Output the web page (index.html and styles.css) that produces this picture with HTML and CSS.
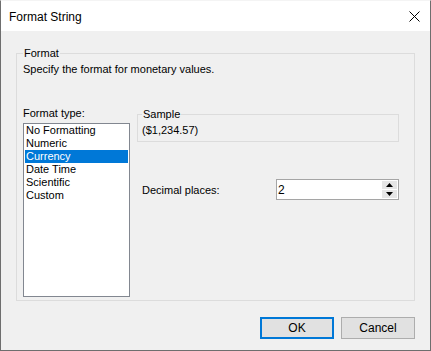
FILE: index.html
```html
<!DOCTYPE html>
<html>
<head>
    <meta charset="UTF-8">
    <title>Format String</title>
    <link rel="stylesheet" href="styles.css">
</head>
<body>
    <div class="window">
        <div class="titlebar">
            <span class="title">Format String</span>
            <svg class="close" width="11" height="11" viewBox="0 0 11 11">
                <path d="M0.5 0.5 L10.5 10.5 M10.5 0.5 L0.5 10.5" stroke="#000" stroke-width="1" fill="none"/>
            </svg>
        </div>
        <div class="client">
            <fieldset class="group">
                <legend>Format</legend>
                <div class="desc">Specify the format for monetary values.</div>
                <div class="columns">
                    <div class="type-col">
                        <div class="label">Format type:</div>
                        <ul class="listbox">
                            <li>No Formatting</li>
                            <li>Numeric</li>
                            <li class="selected">Currency</li>
                            <li>Date Time</li>
                            <li>Scientific</li>
                            <li>Custom</li>
                        </ul>
                    </div>
                    <div class="options">
                        <fieldset class="sample">
                            <legend>Sample</legend>
                            <div class="sample-value">($1,234.57)</div>
                        </fieldset>
                        <div class="decimals">
                            <span>Decimal places:</span>
                            <div class="spin">
                                <span class="spin-value">2</span>
                                <div class="spin-buttons">
                                    <div class="spin-btn"><svg width="7" height="4" viewBox="0 0 7 4"><path d="M3.5 0 L7 4 L0 4 Z" fill="#000"/></svg></div>
                                    <div class="spin-btn"><svg width="7" height="4" viewBox="0 0 7 4"><path d="M0 0 L7 0 L3.5 4 Z" fill="#000"/></svg></div>
                                </div>
                            </div>
                        </div>
                    </div>
                </div>
            </fieldset>
            <div class="buttons">
                <button class="btn default">OK</button>
                <button class="btn">Cancel</button>
            </div>
        </div>
    </div>
</body>
</html>
```

FILE: styles.css
```css
body {
    margin: 0;
    font-family: "Liberation Sans", Arial, sans-serif;
    font-size: 11px;
    color: #000;
    background: #f0f0f0;
}
.window {
    width: 431px;
    height: 351px;
    box-sizing: border-box;
    border: 1px solid #6e6e6e;
    border-top-color: #f4f4f4;
    background: #f0f0f0;
    display: flex;
    flex-direction: column;
}
.titlebar {
    flex-shrink: 0;
    height: 30px;
    background: #fff;
    display: flex;
    align-items: center;
    justify-content: space-between;
    padding: 0 10px 0 8px;
}
.title {
    font-size: 12px;
    line-height: 16px;
    padding-top: 1px;
}
.close {
    display: block;
}
.client {
    flex: 1;
    padding: 15px 15px 11px;
    display: flex;
    flex-direction: column;
}
.group {
    flex-shrink: 0;
    margin: 0;
    border: 1px solid #dcdcdc;
    padding: 0 6px 3px 6px;
}
.group > legend, .sample > legend {
    padding: 0 1px;
    line-height: 15px;
}
.desc {
    line-height: 16px;
}
.columns {
    display: flex;
    gap: 7px;
    margin-top: 28px;
    align-items: flex-start;
}
.type-col {
    width: 107px;
}
.label {
    line-height: 16px;
    margin-bottom: 2px;
}
.listbox {
    list-style: none;
    margin: 0;
    padding: 0 1px;
    height: 174px;
    box-sizing: border-box;
    border: 1px solid #828790;
    background: #fff;
}
.listbox li {
    line-height: 13px;
    padding-left: 1px;
    white-space: nowrap;
}
.listbox li.selected {
    background: #0078d7;
    color: #fff;
}
.options {
    width: 262px;
    padding-top: 2px;
}
.sample {
    margin: 0;
    border: 1px solid #dcdcdc;
    padding: 0 4px 3px 4px;
}
.sample-value {
    line-height: 16px;
}
.decimals {
    display: flex;
    align-items: center;
    justify-content: space-between;
    margin-top: 37px;
    padding-left: 5px;
}
.spin {
    width: 123px;
    height: 21px;
    box-sizing: border-box;
    border: 1px solid #a5a5a5;
    background: #fff;
    display: flex;
    align-items: center;
    justify-content: space-between;
    padding: 0 1px 0 1px;
    font-size: 12px;
}
.spin-buttons {
    display: flex;
    flex-direction: column;
    gap: 1px;
    width: 15px;
}
.spin-btn {
    height: 8px;
    background: #e6e6e6;
    display: flex;
    align-items: center;
    justify-content: center;
}
.spin-btn svg {
    display: block;
}
.buttons {
    flex-shrink: 0;
    display: flex;
    justify-content: flex-end;
    gap: 7px;
    margin-top: 16px;
}
.btn {
    width: 74px;
    height: 22px;
    box-sizing: border-box;
    padding: 0;
    border: 1px solid #adadad;
    background: #e1e1e1;
    font-family: inherit;
    font-size: 12px;
    color: #000;
}
.btn.default {
    border: 2px solid #0078d7;
}
```
